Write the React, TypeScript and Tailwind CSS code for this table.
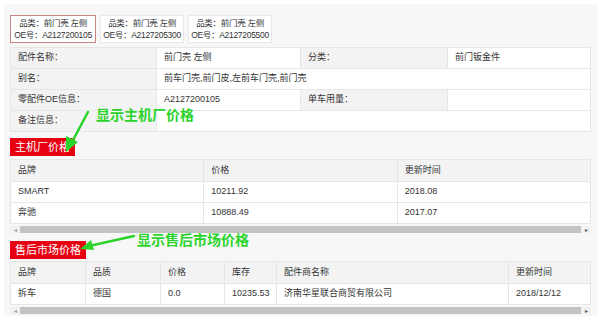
import React from "react";

const font = { fontFamily: '"Liberation Sans", "Noto Sans CJK SC", sans-serif' };

const tabs = [
  { cat: "前门壳 左侧", oe: "A2127200105", active: true },
  { cat: "前门壳 左侧", oe: "A2127205300", active: false },
  { cat: "前门壳 左侧", oe: "A2127205500", active: false },
];

const oemRows = [
  { brand: "SMART", price: "10211.92", time: "2018.08" },
  { brand: "奔驰", price: "10888.49", time: "2017.07" },
];

const Scrollbar = () => (
  <div className="flex items-center h-[7px] bg-[#f1f1f1] mt-[2px]">
    <span className="w-[10px] flex justify-center text-[6px] leading-none text-[#999]">◂</span>
    <div className="flex-1 h-full bg-[#c3c3c3]" />
    <span className="w-[10px] flex justify-center text-[6px] leading-none text-[#555]">▸</span>
  </div>
);

const RedTitle = ({ children }: { children: React.ReactNode }) => (
  <div className="flex">
    <div className="bg-[#e60012] text-white text-[11px] leading-[18px] h-[18px] px-[5px]">{children}</div>
  </div>
);

const cell = "border border-[#e6e6e6] px-[7px] h-[21px] align-middle";
const label = cell + " bg-[#f3f3f3]";
const val = cell + " bg-white";

export default function App() {
  return (
    <div className="w-[604px] h-[319px] bg-white pt-[4px] pl-[4px] pr-[7px] pb-[3px] text-[#333]" style={font}>
      <div className="relative h-full bg-[#f7f7f7] pt-[11px] px-[6px]">
        <div className="flex gap-[4px]">
          {tabs.map((t) => (
            <div
              key={t.oe}
              className={
                "flex flex-col justify-center items-center h-[28px] text-[8.5px] leading-[12px] tracking-[-0.3px] bg-white border whitespace-nowrap " +
                (t.active ? "border-[#c98585] w-[86px]" : "border-[#e8e8e8] w-[84px]")
              }
            >
              <div>品类：{t.cat}</div>
              <div>OE号：{t.oe}</div>
            </div>
          ))}
        </div>

        <table className="w-full mt-[4px] border-collapse table-fixed text-[9px]">
          <colgroup>
            <col className="w-[146px]" />
            <col className="w-[144px]" />
            <col className="w-[147px]" />
            <col />
          </colgroup>
          <tbody>
            <tr>
              <td className={label}>配件名称：</td>
              <td className={val}>前门壳 左侧</td>
              <td className={label}>分类：</td>
              <td className={val}>前门钣金件</td>
            </tr>
            <tr>
              <td className={label}>别名：</td>
              <td className={val} colSpan={3}>前车门壳,前门皮,左前车门壳,前门壳</td>
            </tr>
            <tr>
              <td className={label}>零配件OE信息：</td>
              <td className={val}>A2127200105</td>
              <td className={label}>单车用量：</td>
              <td className={val}></td>
            </tr>
            <tr>
              <td className={label}>备注信息：</td>
              <td className={val} colSpan={3}></td>
            </tr>
          </tbody>
        </table>

        <div className="mt-[6px]">
          <RedTitle>主机厂价格</RedTitle>
        </div>
        <table className="w-full mt-[3px] border-collapse table-fixed text-[9px]">
          <tbody>
            <tr>
              <td className={label + " h-[22px]"}>品牌</td>
              <td className={label + " h-[22px]"}>价格</td>
              <td className={label + " h-[22px]"}>更新时间</td>
            </tr>
            {oemRows.map((r) => (
              <tr key={r.brand}>
                <td className={val}>{r.brand}</td>
                <td className={val}>{r.price}</td>
                <td className={val}>{r.time}</td>
              </tr>
            ))}
          </tbody>
        </table>
        <Scrollbar />

        <div className="mt-[8px]">
          <RedTitle>售后市场价格</RedTitle>
        </div>
        <table className="w-full mt-[2px] border-collapse table-fixed text-[9px]">
          <colgroup>
            <col className="w-[75px]" />
            <col className="w-[75px]" />
            <col className="w-[64px]" />
            <col className="w-[52px]" />
            <col className="w-[232px]" />
            <col />
          </colgroup>
          <tbody>
            <tr>
              <td className={label + " h-[22px]"}>品牌</td>
              <td className={label + " h-[22px]"}>品质</td>
              <td className={label + " h-[22px]"}>价格</td>
              <td className={label + " h-[22px]"}>库存</td>
              <td className={label + " h-[22px]"}>配件商名称</td>
              <td className={label + " h-[22px]"}>更新时间</td>
            </tr>
            <tr>
              <td className={val}>拆车</td>
              <td className={val}>德国</td>
              <td className={val}>0.0</td>
              <td className={val + " whitespace-nowrap"}>10235.53</td>
              <td className={val}>济南华星联合商贸有限公司</td>
              <td className={val}>2018/12/12</td>
            </tr>
          </tbody>
        </table>
        <Scrollbar />

        <div className="absolute left-[92px] top-[104px] text-[14px] font-bold text-[#2bd42b] leading-none whitespace-nowrap">
          显示主机厂价格
        </div>
        <div className="absolute left-[133px] top-[229px] text-[14px] font-bold text-[#2bd42b] leading-none whitespace-nowrap">
          显示售后市场价格
        </div>
        <svg className="absolute left-0 top-0 pointer-events-none" width="593" height="312">
          <g stroke="#2bd42b" fill="#2bd42b" strokeWidth="2.5" strokeLinecap="round">
            <line x1="84" y1="108" x2="68" y2="138" />
            <polygon points="62,148 62,132 74,138" strokeWidth="0" />
            <line x1="130" y1="232" x2="85" y2="242" />
            <polygon points="76,245 87,236 90,246" strokeWidth="0" />
          </g>
        </svg>
      </div>
    </div>
  );
}
